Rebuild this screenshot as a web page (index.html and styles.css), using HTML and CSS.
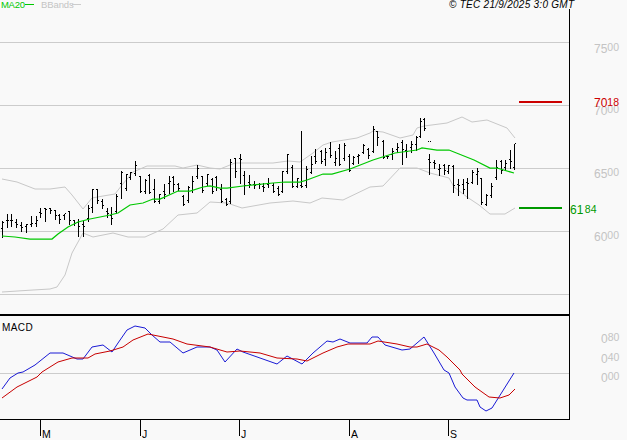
FILE: index.html
```html
<!DOCTYPE html>
<html lang="en">
<head>
<meta charset="utf-8">
<title>Chart</title>
<link rel="stylesheet" href="styles.css">
</head>
<body>
<svg class="chart" width="627" height="440" viewBox="0 0 627 440">
  <g class="grid">
    <path d="M0 42.5H569M0 105.5H569M0 168.5H569M0 231.5H569M0 294.5H569M0 373.5H569"/>
  </g>
  <path class="band" d="M2 179L17 182L35 189L50 189L65 187L72 195L83 209L92 198L103 196L115 194L122 185L133 172L147 166L175 166L183 168L197 165L210 168L220 169L235 163L253 163L273 163L288 161L300 162L313 153L323 145L332 142L357 138L370 133L373 131L383 132L400 138L413 135L417 128L424 126L447 123L462 117L472 122L487 120L507 128L515 138"/>
  <path class="band" d="M2 292L33 290L50 289L57 287L65 275L72 253L83 233L93 237L113 233L128 237L145 237L163 229L178 215L197 213L203 208L210 202L227 203L242 208L270 203L293 201L310 203L322 198L343 200L370 187L383 186L400 168L417 168L430 173L449 178L454 187L467 197L479 205L490 214L505 214L515 208"/>
  <g class="bars">
    <path d="M2 220V237m-1.5-9h1m1-6h1M7 213V227m-1.5-7h1m1 0h1M11 213V226m-1.5-6h1m1 0h1M16 218V227m-1.5-5h1m1 2h1M21 221V231m-1.5-6h1m1 2h1M26 223V232m-1.5-6h1m1-2h1M31 215V226m-1.5-2h1m1-1h1M36 215V226m-1.5-3h1m1-3h1M40 207V217m-1.5-5h1m1 1h1M45 207V221m-1.5-13h1m1 1h1M50 207V213m-1.5-5h1m1 2h1M55 209V219m-1.5-9h1m1 5h1M59 213V223m-1.5-8h1m1 4h1M64 213V219m-1.5-4h1m1-2h1M69 210V224m-1.5-13h1m1 9h1M74 219V225m-1.5-5h1m1 3h1M78 218V236m-1.5-14h1m1 4h1M83 220V236m-1.5-12h1m1 2h1"/>
    <path d="M88 204V221m-1.5-3h1m1-10h1M92 188V212m-1.5-5h1m1-18h1M97 188V203m-1.5-14h1m1 11h1M102 198V208m-1.5-7h1m1 4h1M107 207V217m-1.5-6h1m1 2h1M111 206V224m-1.5-9h1m1 3h1M116 193V213m-1.5-2h1m1-15h1M121 170V198m-1.5-15h1m1-11h1M126 173V190m-1.5-2h1m1-14h1M130 171V179m-1.5-2h1m1-5h1M135 160V175m-1.5-2h1m1-8h1M140 175V192m-1.5-16h1m1 15h1M145 178V193m-1.5-2h1m1-11h1M149 173V193m-1.5-18h1m1 17h1M154 178V202m-1.5-13h1m1 12h1M159 193V203m-1.5-2h1m1-7h1M164 183V198m-1.5-7h1m1 3h1M169 175V193m-1.5-10h1m1-2h1M173 175V191m-1.5-14h1m1 7h1M178 182V190m-1.5-6h1m1 4h1M183 194V205m-1.5-9h1m1 8h1M188 185V202m-1.5-2h1m1-13h1M192 175V192m-1.5-2h1m1-9h1M197 164V178m-1.5-2h1m1-8h1M202 175V192m-1.5-16h1m1 14h1M207 173V185m-1.5-2h1m1-9h1"/>
    <path d="M212 177V193m-1.5-14h1m1 12h1M216 175V190m-1.5-13h1m1 10h1M221 183V202m-1.5-13h1m1 12h1M226 197V205m-1.5-6h1m1 5h1M230 158V203m-1.5-2h1m1-39h1M235 157V177m-1.5-19h1m1 13h1M240 153V183m-1.5-25h1m1 1h1M244 170V194m-1.5-19h1m1 10h1M249 174V187m-1.5-5h1m1 2h1M254 180V188m-1.5-4h1m1 1h1M259 182V188m-1.5-4h1m1 0h1M263 182V191m-1.5-5h1m1 1h1M268 177V187m-1.5-3h1m1-1h1M273 182V192m-1.5-7h1m1 6h1M278 185V195m-1.5-7h1m1 6h1M282 170V192m-1.5-1h1m1-20h1M287 153V173m-1.5-2h1m1-17h1M292 164V187m-1.5-20h1m1 19h1M297 177V187m-1.5-1h1m1-8h1M301 130V187m-1.5-2h1m1 1h1M306 165V187m-1.5-2h1m1-16h1M311 155V173m-1.5-1h1m1-8h1M315 148V163m-1.5-7h1m1 5h1M321 149V163m-1.5-12h1m1 10h1M325 147V165m-1.5-6h1m1-7h1M330 141V157m-1.5-9h1m1 7h1M335 150V165m-1.5-3h1m1-4h1M339 143V165m-1.5-17h1m1 16h1M344 142V160m-1.5-2h1m1-13h1M349 153V171m-1.5-15h1m1 14h1M353 155V164m-1.5-1h1m1-6h1M358 153V163m-1.5-7h1m1-1h1M363 143V153m-1.5-1h1m1-7h1M368 147V158m-1.5-9h1m1 6h1M373 125V152m-1.5-1h1m1-22h1M377 130V145m-1.5-14h1m1 6h1M383 139V158m-1.5-17h1m1 16h1"/>
    <path d="M387 155V158m-1.5-2h1m1 0h1M392 147V159m-1.5-5h1m1-3h1M397 142V152m-1.5-3h1m1-2h1M402 139V164m-1.5-22h1m1 7h1M406 143V157m-1.5-7h1m1 1h1M411 140V152m-1.5-5h1m1-3h1M416 135V150m-1.5-6h1m1-7h1M420 117V137m-1.5-1h1m1-15h1M424 117V130m-1.5-11h1m1 9h1M429 140V140.5m-1.5 0h1m1 0h1M429 153V174m-1.5-15h1m1 3h1M434 159V168m-1.5-6h1m1 1h1M439 163V175m-1.5-6h1m1-1h1M444 163V174m-1.5-9h1m1 5h1M448 164V173m-1.5-2h1m1-6h1M453 164V192m-1.5-26h1m1 19h1M458 178V195m-1.5-11h1m1 1h1M463 178V193m-1.5-9h1m1 5h1M467 177V198m-1.5-16h1m1 1h1M472 169V183m-1.5-1h1m1-10h1M477 167V184m-1.5-10h1m1-3h1M481 177V204m-1.5-26h1m1 24h1M486 193V205m-1.5-1h1m1-9h1M491 182V197m-1.5-2h1m1-9h1M496 159V179m-1.5-2h1m1-10h1M501 159V173m-1.5-12h1m1 9h1M505 159V170m-1.5-3h1m1-4h1M510 149V168m-1.5-9h1m1 2h1M514 143V169m-1.5-2h1m1-24h1"/>
  </g>
  <path class="ma" d="M2 236L15 237L30 239L52 239L58 234L68 227L78 222L90 219L110 215L118 213L130 205L143 203L153 199L160 199L178 191L190 191L203 187L210 186L220 188L227 188L243 186L273 183L285 182L300 182L307 180L323 174L332 174L350 169L373 160L395 153L417 150L422 148L437 150L449 150L474 160L490 168L497 168L514 173"/>
  <path class="blue" d="M2 389L10 378L18 373L23 372L35 365L50 353L63 353L77 359L83 359L92 347L103 345L112 352L118 343L127 330L135 326L145 328L152 335L160 342L170 342L183 353L197 347L210 347L217 350L225 362L237 349L243 352L260 358L277 364L287 356L302 364L313 353L327 341L333 342L340 339L350 343L367 343L372 337L378 337L385 345L402 350L410 349L417 343L424 337L434 353L444 370L449 373L455 387L463 398L467 400L477 400L480 407L486 411L492 408L514 373"/>
  <path class="red" d="M2 398L17 387L37 377L42 372L58 362L72 358L88 358L95 354L110 351L123 347L133 340L148 334L173 339L187 344L210 347L227 352L240 351L260 353L277 358L297 359L307 361L323 353L337 347L348 344L370 344L378 341L397 344L410 347L417 347L427 344L439 350L447 357L460 370L462 374L475 387L489 397L500 398L509 395L515 389"/>
  <path class="level-red" d="M519 102H562"/>
  <path class="level-green" d="M519 208H562"/>
  <g class="axis">
    <path class="frame" d="M569.5 9V419.5M0 419.5H569.5"/>
    <path class="sep" d="M0 315H570"/>
    <path class="frame" d="M40.5 419V436M140.5 419V436M239.5 419V436M349.5 419V436M448.5 419V436"/>
  </g>
  <text class="legend-ma" x="1" y="8">MA20</text>
  <path class="legend-ma-line" d="M25 4.5H34"/>
  <text class="legend-bb" x="41" y="8">BBands</text>
  <path class="legend-bb-line" d="M72 4.5H81"/>
  <text class="stamp" x="449" y="8">© TEC 21/9/2025 3:0 GMT</text>
  <text class="scale" x="594" y="53">75<tspan class="small" dy="-2">00</tspan></text>
  <text class="scale" x="594" y="115">70<tspan class="small" dy="-2">00</tspan></text>
  <text class="scale" x="594" y="178">65<tspan class="small" dy="-2">00</tspan></text>
  <text class="scale" x="594" y="241">60<tspan class="small" dy="-2">00</tspan></text>
  <text class="scale-red" x="594" y="107">70<tspan class="small" dy="-1">18</tspan></text>
  <text class="scale-green" x="570" y="214">61<tspan class="small" dx="1.5" dy="-1">84</tspan></text>
  <text class="scale-m" x="601" y="343">0<tspan class="small" dy="-2">80</tspan></text>
  <text class="scale-m" x="601" y="363">0<tspan class="small" dy="-2">40</tspan></text>
  <text class="scale-m" x="601" y="382">0<tspan class="small" dy="-2">00</tspan></text>
  <text class="macd" x="2" y="331">MACD</text>
  <text class="month" x="42" y="438">M</text>
  <text class="month" x="142" y="438">J</text>
  <text class="month" x="241" y="438">J</text>
  <text class="month" x="351" y="438">A</text>
  <text class="month" x="450" y="438">S</text>
</svg>
</body>
</html>
```
FILE: styles.css
```css
html, body {
  margin: 0;
  padding: 0;
  background: #f9f9f9;
}
.chart {
  display: block;
  font-family: "Liberation Sans", Arial, sans-serif;
  font-size: 10px;
}
.chart path {
  fill: none;
}
.grid path {
  stroke: #cccccc;
  stroke-width: 1;
  shape-rendering: crispEdges;
}
.band {
  stroke: #c8c8c8;
  stroke-width: 1;
}
.bars {
  transform: translate(0.5px, 0.5px);
}
.bars path {
  stroke: #000000;
  stroke-width: 1;
  shape-rendering: crispEdges;
}
.ma {
  stroke: #00c800;
  stroke-width: 1.25;
}
.blue {
  stroke: #0000d0;
  stroke-width: 0.9;
}
.red {
  stroke: #c80000;
  stroke-width: 1;
}
.level-red {
  stroke: #cc0000;
  stroke-width: 2;
  shape-rendering: crispEdges;
}
.level-green {
  stroke: #009900;
  stroke-width: 2;
  shape-rendering: crispEdges;
}
.frame {
  stroke: #000000;
  stroke-width: 1;
  shape-rendering: crispEdges;
}
.sep {
  stroke: #000000;
  stroke-width: 2;
  shape-rendering: crispEdges;
}
.legend-ma {
  fill: #00c800;
  font-size: 9.5px;
  letter-spacing: -0.3px;
}
.legend-ma-line {
  stroke: #00c800;
  stroke-width: 1;
  shape-rendering: crispEdges;
}
.legend-bb {
  fill: #c4c4c4;
  font-size: 9.5px;
  letter-spacing: -0.1px;
}
.legend-bb-line {
  stroke: #cccccc;
  stroke-width: 1;
  shape-rendering: crispEdges;
}
.stamp {
  fill: #000000;
  font-size: 10px;
  font-style: italic;
  letter-spacing: 0.27px;
}
.scale,
.scale-red,
.scale-green,
.scale-m {
  font-size: 12px;
}
.scale { fill: #c4c4c4; }
.scale-red { fill: #cc0000; }
.scale-green { fill: #009900; }
.scale-m { fill: #c4c4c4; }
.small {
  font-size: 10.5px;
}
.macd {
  fill: #000000;
  font-size: 10px;
  letter-spacing: 0.4px;
}
.month {
  fill: #000000;
  font-size: 10.5px;
}
```
